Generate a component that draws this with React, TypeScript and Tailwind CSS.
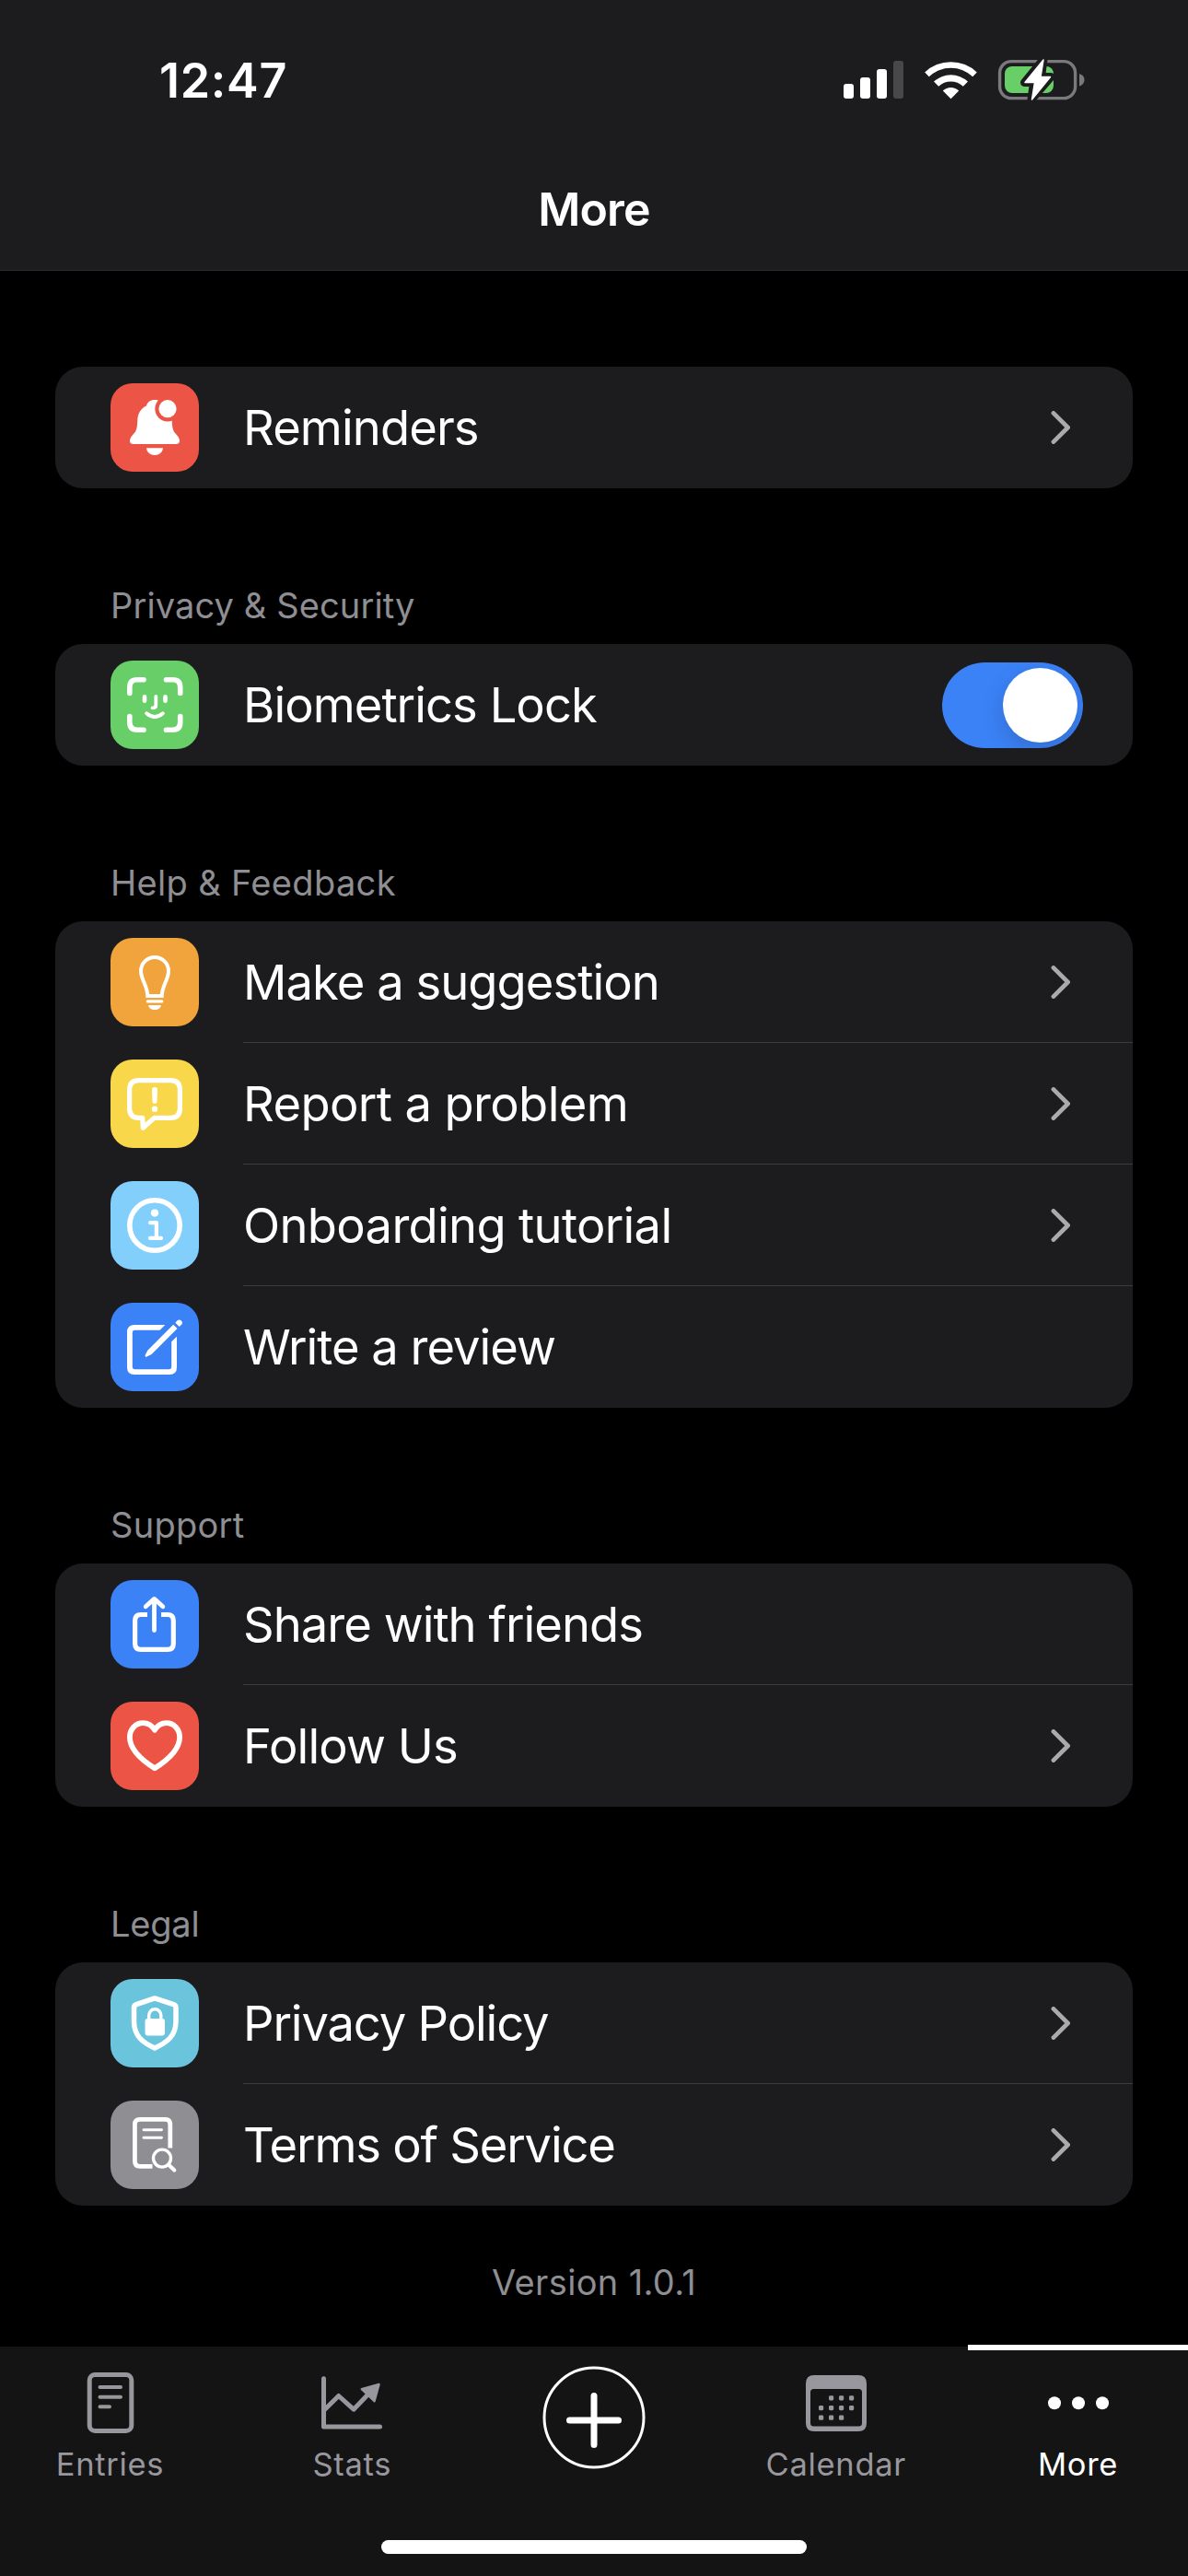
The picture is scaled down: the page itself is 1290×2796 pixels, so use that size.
import React from "react";

type IconProps = { className?: string };

function TileSvg({ children }: { children: React.ReactNode }) {
  return (
    <svg viewBox="0 0 96 96" className="h-24 w-24" fill="none" stroke="#fff" strokeLinecap="round" strokeLinejoin="round">
      {children}
    </svg>
  );
}

const BellIcon = () => (
  <TileSvg>
    <path
      stroke="none"
      fill="#fff"
      d="M48 18C43 18 40 20.5 39 24.5C33 27 29.5 33 29.3 40C29 49 28 52 25 55C22.5 57.5 21 60 21 62.5C21 65 22.5 66 25 66H71C73.5 66 75 65 75 62.5C75 60 73.5 57.5 71 55C68 52 67 49 66.7 40C66.5 33 63 27 57 24.5C56 20.5 53 18 48 18Z"
    />
    <path stroke="none" fill="#fff" d="M39 70.3H57C56.5 75 53 78 48 78S39.5 75 39 70.3Z" />
    <circle cx="62" cy="27.7" r="13.7" fill="#ec5545" stroke="none" />
    <circle cx="62" cy="27.7" r="9.6" fill="#fff" stroke="none" />
  </TileSvg>
);

const FaceIcon = () => (
  <TileSvg>
    <path
      strokeWidth="5.6"
      d="M36 20.8H29Q20.8 20.8 20.8 29V35.5M60.5 20.8H67.5Q75.7 20.8 75.7 29V35.5M20.8 60.5V67Q20.8 75.2 29 75.2H36M75.7 60.5V67Q75.7 75.2 67.5 75.2H60.5"
    />
    <path strokeWidth="4.6" d="M37 39.3V43.7M59.5 39.3V43.7" />
    <path strokeWidth="3.8" d="M49.3 39V48.5Q49.3 51.3 45.5 51.3" />
    <path strokeWidth="4" d="M39.2 57.3Q48 64.8 56.8 57.3" />
  </TileSvg>
);

const BulbIcon = () => (
  <TileSvg>
    <path strokeWidth="4" strokeLinejoin="miter" d="M40.3 63H55.7C56 52 63 45 63 36A15 15 0 0 0 33 36C33 45 40 52 40.3 63Z" />
    <path strokeWidth="3.2" d="M40.3 68.9H55.7" />
    <path stroke="none" fill="#fff" d="M41 73H55C54.5 76 52 78 48 78S41.5 76 41 73Z" />
  </TileSvg>
);

const ProblemIcon = () => (
  <TileSvg>
    <path
      strokeWidth="5.2"
      d="M31 22.6H65Q75.4 22.6 75.4 33V53Q75.4 63.4 65 63.4H47.5L35.3 74.3L34.7 63.4H31Q20.6 63.4 20.6 53V33Q20.6 22.6 31 22.6Z"
    />
    <path stroke="none" fill="#fff" d="M45 32.5Q45 30 48 30T51 32.5L50.5 46Q50.3 48 48 48T45.5 46Z" />
    <circle cx="48" cy="53.7" r="3.2" fill="#fff" stroke="none" />
  </TileSvg>
);

const InfoIcon = () => (
  <TileSvg>
    <circle cx="48" cy="48" r="27.2" strokeWidth="5.6" />
    <circle cx="48" cy="34.6" r="4.1" fill="#fff" stroke="none" />
    <path strokeWidth="4.3" d="M43.2 45.2H49.9V61.9M43 61.9H55" />
  </TileSvg>
);

const ReviewIcon = () => (
  <TileSvg>
    <path
      stroke="none"
      fill="#fff"
      d="M59.3 24H26Q18 24 18 32V70Q18 78 26 78H64Q72 78 72 70V36.7L66.2 42.3V69.5Q66.2 72.3 63.4 72.3H26.6Q23.8 72.3 23.8 69.5V32.5Q23.8 29.7 26.6 29.7H53.6Z"
    />
    <path stroke="none" fill="#fff" d="M37.9 58.4Q37.3 57.5 37.9 56.3L40.3 51.7L68.2 23.8L72.5 28.1L44.6 56L39.5 58.4Q38.5 58.9 37.9 58.4Z" />
    <path stroke="none" fill="#fff" d="M70.3 21.7L72.6 19.3A3.2 3.2 0 0 1 77.1 23.8L74.7 26.1Z" />
  </TileSvg>
);

const ShareIcon = () => (
  <TileSvg>
    <path strokeWidth="5.2" strokeLinecap="butt" d="M40 37.5H33Q26.6 37.5 26.6 44V69Q26.6 75.4 33 75.4H62Q68.3 75.4 68.3 69V44Q68.3 37.5 62 37.5H55" />
    <path strokeWidth="4.8" d="M47.5 54.6V21M38.2 28.8L47.5 20.4L56.8 28.8" />
  </TileSvg>
);

const HeartIcon = () => (
  <TileSvg>
    <path
      strokeWidth="5.8"
      d="M48 30.8C45 25.8 40 23.2 35.3 23.2C27 23.2 20.9 30 20.9 38.5C20.9 52 34 63.5 48 72.3C62 63.5 75.1 52 75.1 38.5C75.1 30 69 23.2 60.7 23.2C56 23.2 51 25.8 48 30.8Z"
    />
  </TileSvg>
);

const ShieldIcon = () => (
  <TileSvg>
    <path strokeWidth="5.5" d="M48 20.9L68.5 27.7Q71 28.6 71 31.2V46C71 62 61 69 48 75C35 69 25.5 62 25.5 46V31.2Q25.5 28.6 28 27.7Z" />
    <rect x="37.5" y="43" width="21.5" height="18.4" rx="2.8" fill="#fff" stroke="none" />
    <path strokeWidth="3.4" d="M41.7 44V39.5A6.5 6.7 0 0 1 54.8 39.5V44" />
  </TileSvg>
);

const TermsIcon = () => (
  <TileSvg>
    <path strokeWidth="4.8" strokeLinecap="butt" d="M64.8 51.5V26Q64.8 20.4 59.5 20.4H32Q26.4 20.4 26.4 26V65.8Q26.4 71.3 32 71.3H45.5" />
    <path strokeWidth="2.9" d="M36 31.7H55.5M36 40.3H55.5" />
    <circle cx="56" cy="62.6" r="9.5" strokeWidth="3.4" />
    <path strokeWidth="4.2" d="M63.5 70L69.3 75.5" />
  </TileSvg>
);

function Chevron() {
  return (
    <svg viewBox="0 0 22 36" className="h-9 w-[22px]" fill="none" stroke="#aaaaac" strokeWidth="4.7" strokeLinecap="round" strokeLinejoin="round">
      <path d="M2.9 2.4L18.6 18L2.9 33.6" />
    </svg>
  );
}

function Toggle() {
  return (
    <div className="-mr-[13px] flex h-[93px] w-[153px] items-center justify-end overflow-hidden rounded-full bg-[#3b82f7] p-1.5">
      <div className="size-[81px] rounded-full bg-white shadow-[0_9px_24px_rgba(0,0,0,0.16)]" />
    </div>
  );
}

type RowData = { label: string; tracking: string; tile: string; icon: React.ReactNode; tail?: React.ReactNode };

function Card({ rows }: { rows: RowData[] }) {
  return (
    <div className="mx-[60px] overflow-hidden rounded-[30px] bg-[#1c1c1e]">
      {rows.map((r, i) => (
        <div key={r.label} className="flex h-[132px] items-center pl-[60px]">
          <div className={`size-24 shrink-0 rounded-3xl ${r.tile}`}>{r.icon}</div>
          <div
            className={`ml-12 flex h-full flex-1 items-center justify-between border-b pt-px pr-[67px] ${
              i < rows.length - 1 ? "border-[#3c3c3f]" : "border-transparent"
            }`}
          >
            <span className={`text-[52.5px] leading-[66px] whitespace-nowrap text-white ${r.tracking}`}>{r.label}</span>
            {r.tail}
          </div>
        </div>
      ))}
    </div>
  );
}

function SectionTitle({ children, tracking }: { children: string; tracking: string }) {
  return (
    <div className="flex h-[169px] items-end pb-[19px] pl-[120px]">
      <h2 className={`text-[38px] leading-[46px] whitespace-nowrap text-[#8e8e93] ${tracking}`}>{children}</h2>
    </div>
  );
}

const EntriesIcon = ({ className }: IconProps) => (
  <svg viewBox="0 0 66 66" className={className} fill="none" stroke="currentColor" strokeLinecap="round">
    <rect x="10.2" y="2.5" width="45.6" height="61" rx="6" strokeWidth="5" />
    <path strokeWidth="4" d="M21.5 16H44M21.5 26.7H44M21.5 37.3H32" />
  </svg>
);

const StatsIcon = ({ className }: IconProps) => (
  <svg viewBox="0 0 66 66" className={className} fill="none" stroke="currentColor" strokeLinecap="round" strokeLinejoin="round">
    <path strokeWidth="5" d="M2.5 6.8V59H63.5" />
    <path strokeWidth="5" d="M4 40L18.7 25.5L35 40.2L52 22.5" />
    <path strokeWidth="2.5" fill="currentColor" d="M43.8 18.2L62.5 13L57.5 31.2Z" />
  </svg>
);

const calendarDots = [
  [25, 25.3], [36, 25.3], [47, 25.3],
  [14, 36], [25, 36], [36, 36], [47, 36],
  [14, 46.6], [25, 46.6], [36, 46.6],
];

const CalendarIcon = ({ className }: IconProps) => (
  <svg viewBox="0 0 66 66" className={className} fill="currentColor">
    <path
      fillRule="evenodd"
      d="M9 3H57Q66 3 66 12V55Q66 64 57 64H9Q0 64 0 55V12Q0 3 9 3ZM8.5 18Q5 18 5 21.5V55Q5 58.5 8.5 58.5H57.5Q61 58.5 61 55V21.5Q61 18 57.5 18Z"
    />
    {calendarDots.map(([x, y]) => (
      <rect key={`${x}-${y}`} x={x} y={y} width="5.2" height="5.2" rx="1.4" />
    ))}
  </svg>
);

const DotsIcon = ({ className }: IconProps) => (
  <svg viewBox="0 0 66 66" className={className} fill="currentColor">
    <circle cx="7" cy="33.3" r="7" />
    <circle cx="33" cy="33.3" r="7" />
    <circle cx="59" cy="33.3" r="7" />
  </svg>
);

function Tab({ label, icon, active }: { label: string; icon: React.ReactNode; active?: boolean }) {
  return (
    <div className={`relative flex w-[239px] flex-col items-center pt-7 ${active ? "text-white" : "text-[#98979d]"}`}>
      {active && <div className="absolute -top-0.5 left-0 h-1.5 w-full bg-white" />}
      {icon}
      <span className="mt-3 text-[34.5px] leading-[43px] tracking-[0.7px] whitespace-nowrap">{label}</span>
    </div>
  );
}

function StatusIcons() {
  return (
    <svg viewBox="910 55 280 64" className="h-16 w-[280px]" fill="#fff">
      <rect x="916" y="91" width="11" height="16" rx="3" />
      <rect x="934" y="84" width="11" height="23" rx="3" />
      <rect x="952" y="75" width="11" height="32" rx="3" />
      <rect x="970" y="66" width="11" height="41" rx="3" fill="#48484a" />
      <path d="M1004.2 78.5A41 41 0 0 1 1060.8 78.5L1056.2 83.2A34.5 34.5 0 0 0 1008.8 83.2Z" />
      <path d="M1014 88.6A27 27 0 0 1 1051 88.6L1045.8 93.8A19.5 19.5 0 0 0 1019.2 93.8Z" />
      <path d="M1023.8 98.4A12.5 12.5 0 0 1 1041.2 98.4L1032.5 107.2Z" />
      <rect x="1085.6" y="66.6" width="82" height="40" rx="12.5" fill="none" stroke="#7a7a7c" strokeWidth="3.4" />
      <path d="M1172 80V93.5Q1177.5 91.5 1177.5 86.7T1172 80Z" fill="#7a7a7c" />
      <rect x="1091" y="72" width="53" height="29" rx="8" fill="#68ce67" />
      <path d="M1133 64.5L1112.5 89.5H1122.5L1120 108L1141 83.5H1130.5L1133 64.5Z" stroke="#1c1c1e" strokeWidth="9" strokeLinejoin="round" />
      <path d="M1133 65L1113 89.5H1123.5L1120.5 108L1140.5 83.5H1130Z" stroke="#fff" strokeWidth="1.5" strokeLinejoin="round" />
    </svg>
  );
}

export default function App() {
  return (
    <div className="flex h-[2796px] w-[1290px] flex-col overflow-hidden bg-black font-['Inter',sans-serif]">
      <header className="h-[294px] border-b border-[#2a2a2c] bg-[#1c1c1e]">
        <div className="flex items-start justify-between pt-[55px] pr-[100px] pl-[173px]">
          <span className="text-[52px] leading-[66px] font-semibold tracking-[0.7px] text-white">12:47</span>
          <StatusIcons />
        </div>
        <h1 className="mt-[73px] text-center text-[50px] leading-[66px] font-semibold tracking-[-0.9px] text-white">More</h1>
      </header>
      <main className="flex-1 pt-[104px]">
        <Card rows={[{ label: "Reminders", tracking: "tracking-[-0.88px]", tile: "bg-[#ec5545]", icon: <BellIcon />, tail: <Chevron /> }]} />
        <SectionTitle tracking="tracking-[0.12px]">Privacy &amp; Security</SectionTitle>
        <Card rows={[{ label: "Biometrics Lock", tracking: "tracking-[-0.95px]", tile: "bg-[#68ce67]", icon: <FaceIcon />, tail: <Toggle /> }]} />
        <SectionTitle tracking="tracking-[0.34px]">Help &amp; Feedback</SectionTitle>
        <Card
          rows={[
            { label: "Make a suggestion", tracking: "tracking-[-0.95px]", tile: "bg-[#f1a33c]", icon: <BulbIcon />, tail: <Chevron /> },
            { label: "Report a problem", tracking: "tracking-[-0.62px]", tile: "bg-[#f8d74a]", icon: <ProblemIcon />, tail: <Chevron /> },
            { label: "Onboarding tutorial", tracking: "tracking-[-0.68px]", tile: "bg-[#83cffc]", icon: <InfoIcon />, tail: <Chevron /> },
            { label: "Write a review", tracking: "tracking-[-1px]", tile: "bg-[#3b82f7]", icon: <ReviewIcon /> },
          ]}
        />
        <SectionTitle tracking="tracking-[0.27px]">Support</SectionTitle>
        <Card
          rows={[
            { label: "Share with friends", tracking: "tracking-[-0.97px]", tile: "bg-[#3b82f7]", icon: <ShareIcon /> },
            { label: "Follow Us", tracking: "tracking-[-0.89px]", tile: "bg-[#ec5545]", icon: <HeartIcon />, tail: <Chevron /> },
          ]}
        />
        <SectionTitle tracking="tracking-[-0.2px]">Legal</SectionTitle>
        <Card
          rows={[
            { label: "Privacy Policy", tracking: "tracking-[-1.15px]", tile: "bg-[#6ac4dc]", icon: <ShieldIcon />, tail: <Chevron /> },
            { label: "Terms of Service", tracking: "tracking-[-1.2px]", tile: "bg-[#8e8e93]", icon: <TermsIcon />, tail: <Chevron /> },
          ]}
        />
        <p className="mt-[60px] text-center text-[38px] leading-[46px] tracking-[0.35px] text-[#8e8e93]">Version 1.0.1</p>
      </main>
      <nav className="flex h-[249px] flex-col justify-between bg-[#141414] pb-6">
        <div className="flex justify-between">
          <Tab label="Entries" icon={<EntriesIcon className="size-[66px]" />} />
          <Tab label="Stats" icon={<StatsIcon className="size-[66px]" />} />
          <div className="flex w-[239px] justify-center pt-[21px]">
            <svg viewBox="0 0 112 112" className="size-28" fill="none" stroke="#fff" strokeLinecap="round">
              <circle cx="56" cy="56" r="54" strokeWidth="3" />
              <path strokeWidth="7" d="M29.5 59H82.500M56 32.5V85.5" />
            </svg>
          </div>
          <Tab label="Calendar" icon={<CalendarIcon className="size-[66px]" />} />
          <Tab label="More" icon={<DotsIcon className="size-[66px]" />} active />
        </div>
        <div className="mx-auto h-[15px] w-[462px] rounded-full bg-white" />
      </nav>
    </div>
  );
}
